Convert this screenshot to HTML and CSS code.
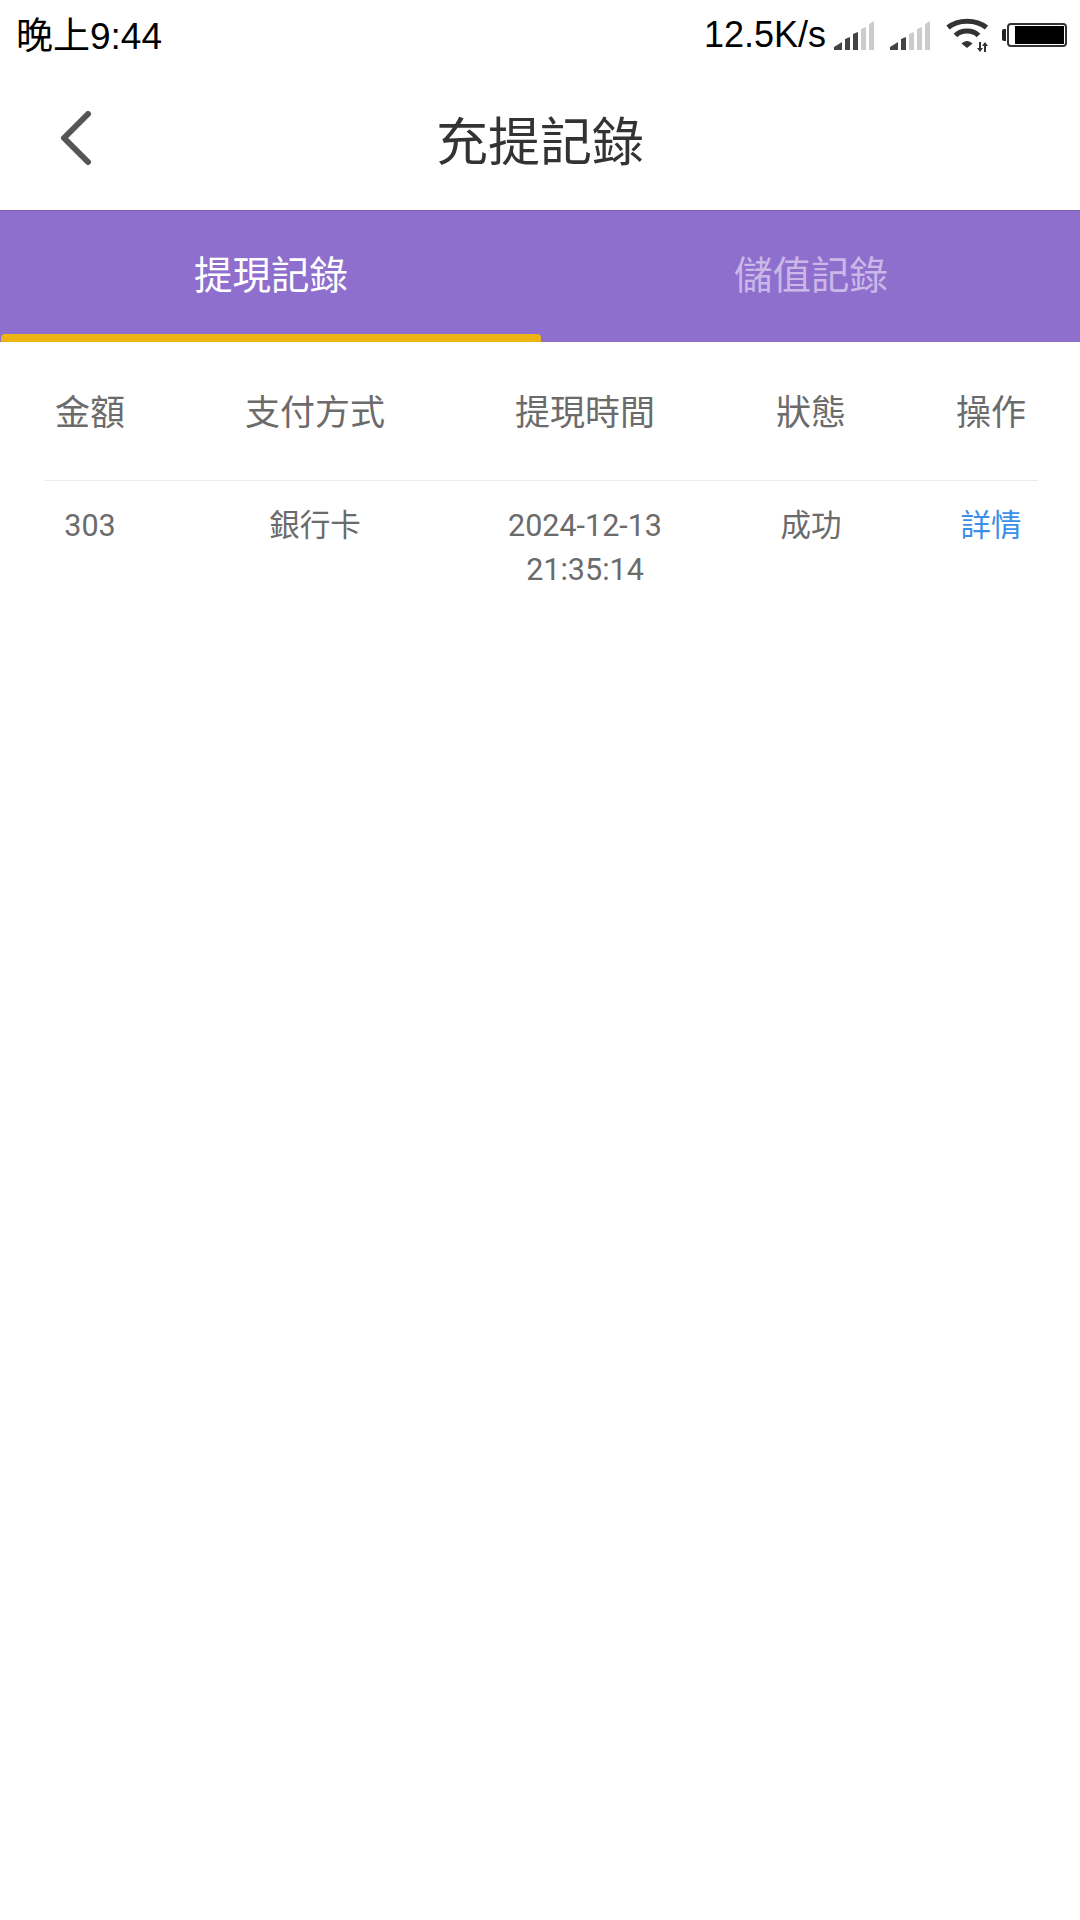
FILE: index.html
```html
<!DOCTYPE html>
<html lang="zh-Hant">
<head>
    <meta charset="UTF-8">
    <meta name="viewport" content="width=device-width, initial-scale=1.0">
    <title>充提記錄</title>
    <link rel="stylesheet" href="styles.css">
</head>
<body>
    <div class="status-bar">
        <span class="status-time">晚上9:44</span>
        <div class="status-right">
            <span class="status-speed">12.5K/s</span>
            <svg class="signal" width="40" height="30" viewBox="0 0 40 30">
                <path fill="#444" d="M0 29 V26 L8 21 V29 Z M11 29 V18 L16 16 V29 Z M19 29 V13 L24 11 V29 Z"/>
                <path fill="#ccc" d="M27 29 V8 L32 6 V29 Z M35 29 V3 L40 0 V29 Z"/>
            </svg>
            <svg class="signal signal-second" width="40" height="30" viewBox="0 0 40 30">
                <path fill="#444" d="M0 29 V26 L8 21 V29 Z M11 29 V18 L16 16 V29 Z"/>
                <path fill="#ccc" d="M19 29 V13 L24 11 V29 Z M27 29 V8 L32 6 V29 Z M35 29 V3 L40 0 V29 Z"/>
            </svg>
            <svg class="wifi" width="44" height="34" viewBox="0 0 44 34">
                <path fill="none" stroke="#333" stroke-width="5" d="M2 9.5 C12 1 30 1 40.5 9.5"/>
                <path fill="none" stroke="#333" stroke-width="5" d="M9.5 17.5 C15 11.5 27 11.5 32.5 17.5"/>
                <path fill="#333" d="M21 30 L15.5 25.5 C19 22 23 22 26.5 25.5 Z"/>
                <path fill="#333" d="M33 24 h2 v6 h2 l-3 4 l-3 -4 h2 z M38 34 h2 v-6 h2 l-3 -4 l-3 4 h2 z"/>
            </svg>
            <div class="battery">
                <span class="battery-cap"></span>
                <div class="battery-body"><span class="battery-level"></span></div>
            </div>
        </div>
    </div>

    <div class="header">
        <a href="#" class="back">
            <svg width="32" height="54" viewBox="0 0 32 54">
                <path fill="none" stroke="#555" stroke-width="6" stroke-linecap="round" stroke-linejoin="round" d="M28 3 L4 27 L28 51"/>
            </svg>
        </a>
        <h1>充提記錄</h1>
    </div>

    <div class="tabs">
        <a href="#" class="tab active">提現記錄</a>
        <a href="#" class="tab">儲值記錄</a>
    </div>

    <div class="records">
        <div class="row row-head">
            <span>金額</span>
            <span>支付方式</span>
            <span>提現時間</span>
            <span>狀態</span>
            <span>操作</span>
        </div>
        <div class="row">
            <span>303</span>
            <span>銀行卡</span>
            <span>2024-12-13<br>21:35:14</span>
            <span>成功</span>
            <a href="#" class="detail">詳情</a>
        </div>
    </div>
</body>
</html>
```

FILE: styles.css
```css
body {
    font-family: Roboto, "Noto Sans CJK TC", sans-serif;
    background-color: #fff;
    margin: 0;
    width: 1080px;
    height: 1920px;
    overflow: hidden;
}
a {
    text-decoration: none;
}
.status-bar {
    display: flex;
    justify-content: space-between;
    align-items: center;
    height: 70px;
    padding: 0 13px 0 16px;
    color: #000;
    font-family: "Liberation Sans", "Noto Sans CJK TC", sans-serif;
    font-size: 36px;
}
.status-time {
    font-size: 37px;
    margin-bottom: 4px;
}
.status-right {
    display: flex;
    align-items: center;
}
.status-speed {
    margin-right: 8px;
}
.signal {
    margin-top: 2px;
}
.signal-second {
    margin-left: 16px;
}
.wifi {
    margin-left: 16px;
}
.battery {
    display: flex;
    align-items: center;
    margin-left: 12px;
}
.battery-cap {
    width: 4px;
    height: 12px;
    background-color: #222;
    border-radius: 2px 0 0 2px;
    margin-right: 1px;
}
.battery-body {
    width: 60px;
    height: 24px;
    box-sizing: border-box;
    border: 2px solid #333;
    border-radius: 4px;
    padding: 1px 1px 1px 6px;
}
.battery-level {
    display: block;
    height: 100%;
    background-color: #000;
}
.header {
    position: relative;
    display: flex;
    justify-content: center;
    align-items: center;
    height: 140px;
}
.header h1 {
    margin: 0 0 3px;
    font-size: 52px;
    font-weight: 400;
    color: #333;
}
.back {
    position: absolute;
    left: 60px;
    top: 41px;
}
.tabs {
    display: flex;
    height: 132px;
    background-color: #8f6fcd;
    border-top: 1px solid #7c5eb4;
    box-sizing: border-box;
}
.tab {
    flex: 1;
    position: relative;
    display: flex;
    justify-content: center;
    padding-top: 38px;
    padding-left: 2px;
    font-size: 38.5px;
    line-height: 54px;
    color: #c9b8e8;
}
.tab.active {
    color: #fff;
}
.tab.active::after {
    content: "";
    position: absolute;
    left: 1px;
    right: -1px;
    bottom: 0;
    height: 8px;
    background-color: #edb514;
    border-radius: 4px 4px 0 0;
}
.records {
    margin: 0 42px 0 44px;
    color: #6b6b6b;
}
.row {
    display: grid;
    grid-template-columns: 92px 358px 182px 270px 90px;
    font-size: 30.5px;
    line-height: 44px;
    text-align: center;
    padding-top: 23px;
}
.row-head {
    font-size: 35px;
    line-height: 48px;
    padding: 48px 0 42px;
    border-bottom: 1px solid #ececf0;
}
.detail {
    color: #3b8fe8;
}
```
